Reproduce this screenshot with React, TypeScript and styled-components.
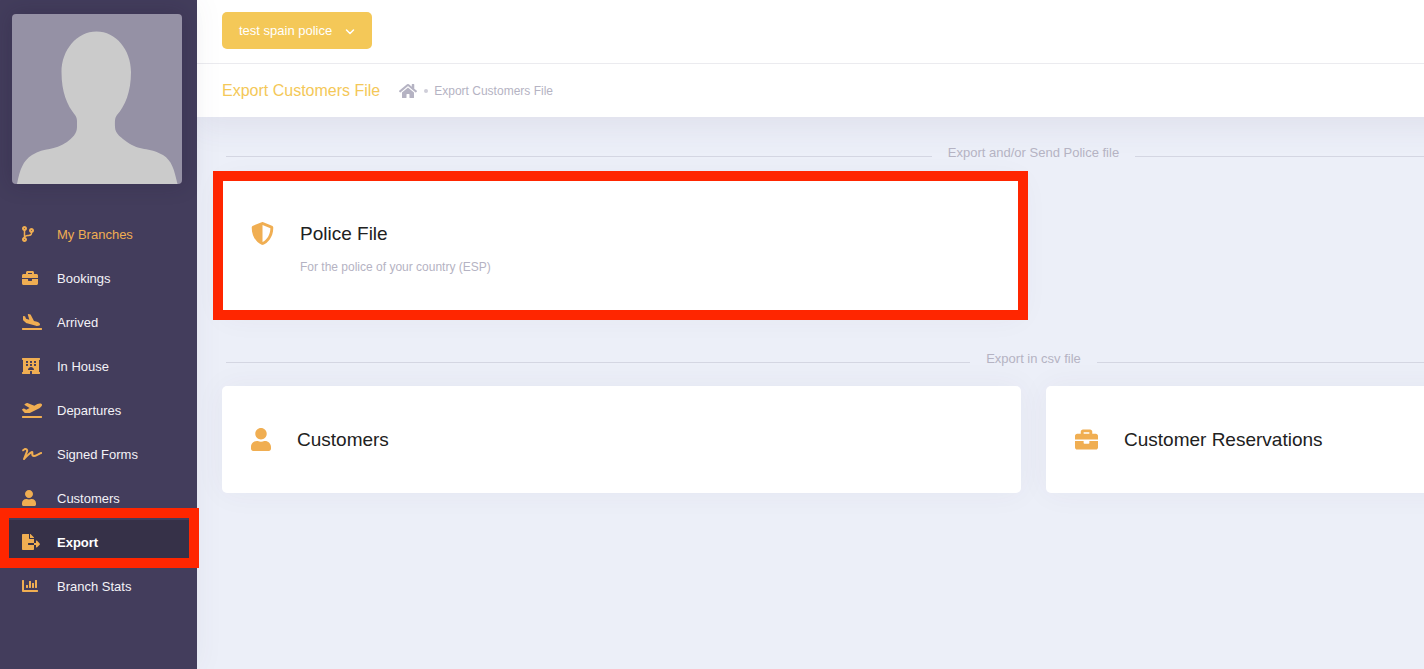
import React from "react";
import styled, { createGlobalStyle, css } from "styled-components";
import type { IconType } from "react-icons";
import {
  FaBriefcase,
  FaChartBar,
  FaCodeBranch,
  FaFileExport,
  FaHome,
  FaHotel,
  FaPlaneArrival,
  FaPlaneDeparture,
  FaShieldAlt,
  FaSignature,
  FaUser,
} from "react-icons/fa";

const colors = {
  sidebar: "#433d5c",
  sidebarActive: "#363148",
  accent: "#f0ae52",
  yellow: "#f4c858",
  muted: "#b5b3c3",
  ink: "#212121",
  page: "#eceff8",
  line: "#d4d6e2",
  marker: "#ff2600",
};

const GlobalStyle = createGlobalStyle`
  *, *::before, *::after { box-sizing: border-box; }
  html, body { margin: 0; padding: 0; }
  body {
    overflow-x: hidden;
    background: ${colors.page};
    color: ${colors.ink};
    font-family: "Liberation Sans", Arial, Helvetica, sans-serif;
    font-size: 13px;
    line-height: 20px;
  }
  a { color: inherit; text-decoration: none; }
`;

const Layout = styled.div`
  display: flex;
  min-height: 100vh;
  overflow: hidden;
`;

const Sidebar = styled.aside`
  position: relative;
  z-index: 2;
  flex: 0 0 197px;
  padding-top: 14px;
  background: ${colors.sidebar};
  box-shadow: 0 0 28px rgba(82, 63, 105, 0.06);
`;

const Avatar = styled.svg`
  display: block;
  width: 170px;
  height: 170px;
  margin: 0 0 28px 12px;
  border-radius: 4px;
  background: #9591a5;
  box-shadow: 0 0 20px rgba(30, 25, 50, 0.25);
`;

const NavList = styled.ul`
  margin: 0;
  padding: 0;
  list-style: none;
`;

const NavItem = styled.li`
  position: relative;
`;

const NavLink = styled.a<{ $tone?: "accent" | "active" }>`
  display: flex;
  align-items: center;
  height: 44px;
  padding-left: 22px;
  color: #f3f2f7;
  ${({ $tone }) =>
    $tone === "accent" &&
    css`
      color: ${colors.accent};
    `}
  ${({ $tone }) =>
    $tone === "active" &&
    css`
      color: #ffffff;
      font-weight: 700;
      background: ${colors.sidebarActive};
    `}
`;

const NavIcon = styled.span<{ $width: number }>`
  display: flex;
  width: 35px;
  color: ${colors.accent};

  svg {
    width: ${({ $width }) => $width}px;
    height: 16px;
  }
`;

const NavLabel = styled.span`
  padding-top: 2px;
`;

const Marker = styled.span<{ $inset: string }>`
  position: absolute;
  inset: ${({ $inset }) => $inset};
  border: 10px solid ${colors.marker};
  pointer-events: none;
`;

const Main = styled.main`
  flex: 1 0 auto;
`;

const Header = styled.header`
  background: #ffffff;
  box-shadow: 0 10px 30px rgba(82, 63, 105, 0.08);
`;

const TopBar = styled.div`
  display: flex;
  align-items: flex-start;
  height: 64px;
  padding: 12px 25px;
  border-bottom: 1px solid #ebebef;
`;

const BranchButton = styled.button`
  display: flex;
  align-items: center;
  justify-content: space-between;
  width: 150px;
  height: 37px;
  padding: 0 17px;
  border: 0;
  border-radius: 5px;
  background: ${colors.yellow};
  color: #ffffff;
  font: inherit;
  cursor: pointer;
`;

const SubHeader = styled.div`
  display: flex;
  align-items: center;
  height: 53px;
  padding: 0 25px;
`;

const PageTitle = styled.h1`
  margin: 0 19px 0 0;
  color: ${colors.yellow};
  font-size: 16px;
  font-weight: 400;
`;

const Breadcrumb = styled.nav`
  display: flex;
  align-items: center;
  color: ${colors.muted};
  font-size: 12px;

  svg {
    display: block;
    width: 18px;
    height: 16px;
  }
`;

const Dot = styled.span`
  width: 4px;
  height: 4px;
  margin: 0 6px 0 7px;
  border-radius: 50%;
  background: #cfced9;
`;

const Content = styled.div`
  display: flex;
  flex-direction: column;
  gap: 32px;
  padding: 26px 25px;
`;

const SectionLabel = styled.h2`
  display: flex;
  align-items: center;
  gap: 16px;
  margin: 0 0 17px;
  padding: 0 4px;
  color: ${colors.muted};
  font-size: 13px;
  font-weight: 400;

  &::before,
  &::after {
    content: "";
    flex: 1;
    height: 1px;
    margin-top: 6px;
    background: ${colors.line};
  }
`;

const CardGrid = styled.div`
  display: grid;
  grid-template-columns: repeat(2, minmax(799px, 1fr));
  gap: 25px;
`;

const Card = styled.a<{ $iconWidth: number }>`
  position: relative;
  display: flex;
  align-items: flex-start;
  gap: 26px;
  padding: 40px 29px;
  border-radius: 5px;
  background: #ffffff;
  box-shadow: 0 0 30px rgba(82, 63, 105, 0.05);

  svg {
    width: ${({ $iconWidth }) => $iconWidth}px;
    height: 23px;
    margin-top: 2px;
    color: ${colors.accent};
  }
`;

const CardTitle = styled.h3`
  margin: 0;
  font-size: 19px;
  font-weight: 400;
  line-height: 27px;
`;

const CardText = styled.p`
  margin: 10px 0 0;
  color: ${colors.muted};
  font-size: 12px;
`;

type NavEntry = {
  label: string;
  icon: IconType;
  width: number;
  tone?: "accent" | "active";
};

const navEntries: NavEntry[] = [
  { label: "My Branches", icon: FaCodeBranch, width: 12, tone: "accent" },
  { label: "Bookings", icon: FaBriefcase, width: 16 },
  { label: "Arrived", icon: FaPlaneArrival, width: 20 },
  { label: "In House", icon: FaHotel, width: 18 },
  { label: "Departures", icon: FaPlaneDeparture, width: 20 },
  { label: "Signed Forms", icon: FaSignature, width: 20 },
  { label: "Customers", icon: FaUser, width: 14 },
  { label: "Export", icon: FaFileExport, width: 18, tone: "active" },
  { label: "Branch Stats", icon: FaChartBar, width: 16 },
];

type ExportCardProps = {
  icon: IconType;
  iconWidth: number;
  title: string;
  text?: string;
  marked?: boolean;
};

function ExportCard({ icon: Icon, iconWidth, title, text, marked }: ExportCardProps) {
  return (
    <Card href="#" $iconWidth={iconWidth}>
      <Icon aria-hidden />
      <div>
        <CardTitle>{title}</CardTitle>
        {text && <CardText>{text}</CardText>}
      </div>
      {marked && <Marker $inset="-9px -7px -3px -9px" />}
    </Card>
  );
}

export default function App() {
  return (
    <>
      <GlobalStyle />
      <Layout>
        <Sidebar>
          <Avatar viewBox="0 0 170 170" role="img" aria-label="Profile picture">
            <path
              d="M84.500 17.500C104 17.500 119 36 119 58C119 78 113 92 105 101C102.500 104 103 108 103 113C103 120 110 124 115 128C127 137 137 133 151 141C160 147 162 155 165.500 170H5C8 155 11 147 20 141C33 133 42 137 55 128C60 124 65 120 65 113C65 108 65.500 104 63 101C55 91 49.500 78 49.500 58C49.500 36 65 17.500 84.500 17.500Z"
              fill="#cbcbcb"
            />
          </Avatar>
          <nav aria-label="Main">
            <NavList>
              {navEntries.map(({ label, icon: Icon, width, tone }) => (
                <NavItem key={label}>
                  <NavLink
                    href="#"
                    $tone={tone}
                    aria-current={tone === "active" ? "page" : undefined}
                  >
                    <NavIcon $width={width}>
                      <Icon aria-hidden />
                    </NavIcon>
                    <NavLabel>{label}</NavLabel>
                  </NavLink>
                  {tone === "active" && <Marker $inset="-12px -2px -4px -1px" />}
                </NavItem>
              ))}
            </NavList>
          </nav>
        </Sidebar>
        <Main>
          <Header>
            <TopBar>
              <BranchButton type="button" aria-haspopup="menu">
                test spain police
                <svg width="10" height="10" viewBox="0 0 10 10" aria-hidden>
                  <path
                    d="M1.500 4L5 7.500L8.500 4"
                    fill="none"
                    stroke="currentColor"
                    strokeWidth="1.500"
                    strokeLinecap="round"
                    strokeLinejoin="round"
                  />
                </svg>
              </BranchButton>
            </TopBar>
            <SubHeader>
              <PageTitle>Export Customers File</PageTitle>
              <Breadcrumb aria-label="Breadcrumb">
                <a href="#" aria-label="Home">
                  <FaHome aria-hidden />
                </a>
                <Dot />
                <a href="#">Export Customers File</a>
              </Breadcrumb>
            </SubHeader>
          </Header>
          <Content>
            <section>
              <SectionLabel>Export and/or Send Police file</SectionLabel>
              <CardGrid>
                <ExportCard
                  icon={FaShieldAlt}
                  iconWidth={23}
                  title="Police File"
                  text="For the police of your country (ESP)"
                  marked
                />
              </CardGrid>
            </section>
            <section>
              <SectionLabel>Export in csv file</SectionLabel>
              <CardGrid>
                <ExportCard icon={FaUser} iconWidth={20} title="Customers" />
                <ExportCard
                  icon={FaBriefcase}
                  iconWidth={23}
                  title="Customer Reservations"
                />
              </CardGrid>
            </section>
          </Content>
        </Main>
      </Layout>
    </>
  );
}
